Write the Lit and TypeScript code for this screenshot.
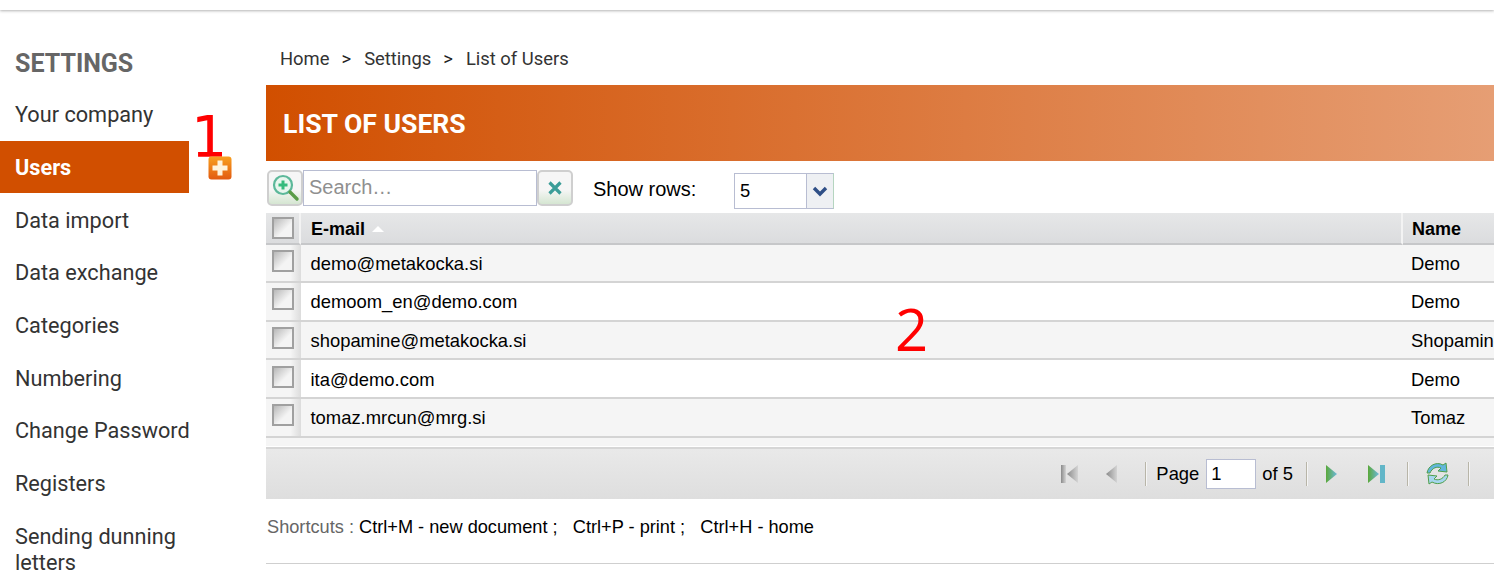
import { LitElement, html, css, svg } from "lit";
import { customElement } from "lit/decorators.js";

const menu = ["Your company", "Users", "Data import", "Data exchange", "Categories", "Numbering", "Change Password", "Registers", "Sending dunning letters"];
const rows = [
  ["demo@metakocka.si", "Demo"],
  ["demoom_en@demo.com", "Demo"],
  ["shopamine@metakocka.si", "Shopamine"],
  ["ita@demo.com", "Demo"],
  ["tomaz.mrcun@mrg.si", "Tomaz"],
];

const defs = svg`
  <linearGradient id="gr" x1="0" x2="1" y1="0" y2="0"><stop offset="0" stop-color="#8a8a8a"/><stop offset="1" stop-color="#d4d4d4"/></linearGradient>
  <linearGradient id="gn" x1="0" x2="1" y1="0" y2="0"><stop offset="0" stop-color="#5aa83a"/><stop offset="1" stop-color="#6cb8dc"/></linearGradient>
`;

@customElement("app-root")
export class AppRoot extends LitElement {
  static styles = css`
    :host { display: block; height: 579px; overflow: hidden; position: relative; background: #fff; font-family: "Liberation Sans", Arial, sans-serif; color: #000; }
    .top { height: 10px; box-shadow: 0 1px 3px rgba(0,0,0,.3); }
    .body { display: flex; }
    .side { width: 266px; flex: none; padding-top: 39px; font-family: Roboto, sans-serif; }
    .side h2 { margin: 0 0 9px 15px; font-size: 25px; line-height: 30px; font-weight: 700; color: #666; }
    .item { width: 200px; box-sizing: border-box; padding: 14.35px 0 12.35px 15px; font-size: 21.7px; line-height: 26px; color: #333; }
    .item.on { width: 189px; background: #d14f00; color: #fff; font-weight: 700; }
    .main { flex: 1; min-width: 0; }
    .crumb { height: 75px; box-sizing: border-box; padding: 37px 0 0 14px; font: 18.4px/24px Roboto, sans-serif; color: #333; display: flex; }
    .crumb i { font-style: normal; margin: 0 13px 0 12px; color: #222; }
    .banner { height: 76px; box-sizing: border-box; padding: 1px 0 0 17px; display: flex; align-items: center; background: linear-gradient(90deg, #d14f00, #e69e74); color: #fff; font: 700 26.6px Roboto, sans-serif; }
    .tools { height: 52px; display: flex; box-sizing: border-box; padding-top: 9px; }
    .ibtn { width: 36px; height: 36px; box-sizing: border-box; border: 2px solid #cfcfcf; border-radius: 5px; background: linear-gradient(#f6f6f6 55%, #d5e6d2); display: flex; align-items: center; justify-content: center; }
    .ibtn.a { margin-left: 1px; }
    .search { width: 234px; height: 36px; box-sizing: border-box; border: 1px solid #b8bdd2; font-size: 20px; line-height: 33px; padding-left: 5px; color: #8f8f8f; }
    .show { margin: 3px 0 0 20px; width: 141px; font-size: 20px; line-height: 33px; }
    .sel { width: 100px; height: 36px; margin-top: 3px; box-sizing: border-box; border: 1px solid #b8bdd2; border-right-color: #b5d5c0; display: flex; font-size: 18.4px; line-height: 33px; }
    .sel span { width: 71px; padding-left: 5px; box-sizing: border-box; }
    .sel b { flex: 1; border-left: 1px solid #b8bdd2; background: #eef0f3; display: flex; align-items: center; justify-content: center; }
    .grid { display: grid; grid-template-columns: 35px 1102px 1fr; overflow: hidden; }
    .th, .td { display: flex; align-items: center; white-space: nowrap; box-sizing: border-box; }
    .th { height: 31.6px; padding-top: 3px; background: linear-gradient(#e6e7e8, #dbdcde); border-bottom: 2px solid #c6c7c9; font-weight: 700; font-size: 18px; padding-left: 10px; }
    .th.c { border-right: 2px solid #f3f3f3; padding: 0 0 0 6px; }
    .th.e { border-right: 2px solid #f3f3f3; }
    .th.n { padding-left: 9px; }
    .td { height: 38.6px; padding-top: 2px; border-bottom: 2px solid #d4d4d4; font-size: 18.4px; padding-left: 9.5px; }
    .td.n { padding-left: 8px; }
    .td.c { padding: 0 0 4px 6px; background: linear-gradient(90deg, #f5f5f5 70%, #dcdcdc); }
    .odd { background: #f5f5f5; }
    .cb { width: 22px; height: 22px; box-sizing: border-box; border: 2px solid #a0a0a0; background: linear-gradient(135deg, #b8b8b8, #f4f4f4 60%); }
    .arrow { margin-left: 7px; width: 0; height: 0; border: 6px solid transparent; border-top: 0; border-bottom: 6px solid #fff; }
    .rest { height: 8.4px; background: #f5f5f5; }
    .gap { height: 3px; box-sizing: border-box; border-bottom: 2px solid #d6d6d6; }
    .pager { height: 50px; background: linear-gradient(#e9e9e9, #dedede); display: flex; align-items: center; justify-content: flex-end; padding-right: 24px; font-size: 18.4px; gap: 0; }
    .sep { height: 24px; background: #b8b5a8; border-right: 1px solid #f5f5f5; box-sizing: content-box; width: 1px; }
    .pg { width: 50px; height: 30px; box-sizing: border-box; border: 1px solid #b8bdd2; background: #fff; padding-left: 4px; line-height: 28px; margin: 0 6px 0 7px; }
    .pager svg { display: block; }
    .ml9 { margin-left: 9px; }
    .ml13 { margin-left: 13px; }
    .ml16 { margin-left: 16px; }
    .ml17 { margin-left: 17px; }
    .ml18 { margin-left: 18px; }
    .ml21 { margin-left: 21px; }
    .ml25 { margin-left: 25px; }
    .ml27 { margin-left: 27px; }
    .ml29 { margin-left: 29px; }
    .short { height: 65px; border-bottom: 1px solid #cfcfcf; box-sizing: border-box; padding: 17px 0 0 1px; font-size: 18.2px; line-height: 22px; display: flex; white-space: pre; }
    .short span { color: #666; }
    .mark { position: absolute; font-size: 58px; line-height: 58px; color: #f00; }
    .one { left: 191px; top: 108px; font-family: "DejaVu Sans", sans-serif; font-size: 57px; }
    .two { left: 895px; top: 300px; font-family: "Open Sans", sans-serif; }
    .plus { position: absolute; left: 208px; top: 156px; }
  `;

  private icon(kind: string, cls = "") {
    const box = (w: number, h: number, body: unknown) => html`<svg class=${cls} width=${w} height=${h} viewBox="0 0 ${w} ${h}">${defs}${body}</svg>`;
    switch (kind) {
      case "first": return box(20, 20, svg`<rect x="1" y="1" width="5" height="18" fill="url(#gr)"/><path d="M18 1v18L7 10z" fill="url(#gr)"/>`);
      case "prev": return box(13, 20, svg`<path d="M12 1v18L1 10z" fill="url(#gr)"/>`);
      case "next": return box(13, 20, svg`<path d="M1 1v18l11-9z" fill="url(#gn)"/>`);
      case "last": return box(19, 20, svg`<path d="M1 1v18l11-9z" fill="url(#gn)"/><rect x="13" y="1" width="5" height="18" fill="#62b6c8"/>`);
      default: return box(25, 25, svg`
        <path d="M2 12C3 5 11 0 18 4l3-2 1 9-9-1 3-3C12 5 7 7 5 12z" fill="#62b6dc" stroke="#4f9f4a"/>
        <path d="M23 14c-1 7-9 11-16 7l-3 2-1-9 9 1-3 3c4 2 9 0 11-4z" fill="#a6d6ee" stroke="#4f9f4a"/>`);
    }
  }

  render() {
    return html`
      <div class="top"></div>
      <div class="body">
        <nav class="side">
          <h2>SETTINGS</h2>
          ${menu.map((m, i) => html`<div class="item ${i === 1 ? "on" : ""}">${m}</div>`)}
        </nav>
        <main class="main">
          <div class="crumb">Home<i>&gt;</i>Settings<i>&gt;</i>List of Users</div>
          <div class="banner">LIST OF USERS</div>
          <div class="tools">
            <div class="ibtn a"><svg width="30" height="30" viewBox="0 0 30 30"><circle cx="13" cy="12" r="9" fill="#e8f6ee" stroke="#5cb89a" stroke-width="2.2"/><path d="M13 7.5v9M8.5 12h9" stroke="#35bb7d" stroke-width="3"/><path d="M20 19l7 7" stroke="#5a9c48" stroke-width="3.4" stroke-linecap="round"/></svg></div>
            <div class="search">Search…</div>
            <div class="ibtn"><svg width="16" height="16" viewBox="0 0 16 16"><path d="M2.5 2.5l11 11M13.5 2.5l-11 11" stroke="#3b9d98" stroke-width="3.2"/></svg></div>
            <div class="show">Show rows:</div>
            <div class="sel"><span>5</span><b><svg width="16" height="11" viewBox="0 0 16 11"><path d="M2 2l6 6 6-6" fill="none" stroke="#2f4f86" stroke-width="3.4"/></svg></b></div>
          </div>
          <div class="grid">
            <div class="th c"><div class="cb"></div></div>
            <div class="th e">E-mail<div class="arrow"></div></div>
            <div class="th n">Name</div>
            ${rows.map((r, i) => html`
              <div class="td c"><div class="cb"></div></div>
              <div class="td ${i % 2 ? "" : "odd"}">${r[0]}</div>
              <div class="td n ${i % 2 ? "" : "odd"}">${r[1]}</div>`)}
          </div>
          <div class="rest"></div>
          <div class="gap"></div>
          <div class="pager">
            ${this.icon("first")}
            ${this.icon("prev", "ml25")}
            <div class="sep ml27"></div>
            <span class="ml9">Page</span>
            <div class="pg">1</div>
            <span>of 5</span>
            <div class="sep ml13"></div>
            ${this.icon("next", "ml17")}
            ${this.icon("last", "ml29")}
            <div class="sep ml21"></div>
            ${this.icon("refresh", "ml16")}
            <div class="sep ml18"></div>
          </div>
          <div class="short"><span>Shortcuts : </span>Ctrl+M - new document ;   Ctrl+P - print ;   Ctrl+H - home</div>
        </main>
      </div>
      <div class="mark one">1</div>
      <div class="mark two">2</div>
      <svg class="plus" width="24" height="24" viewBox="0 0 24 24"><defs><linearGradient id="o" x1="0" x2="0" y1="0" y2="1"><stop offset="0" stop-color="#f8a020"/><stop offset="1" stop-color="#e25a10"/></linearGradient></defs><rect x=".5" y=".5" width="23" height="23" rx="3" fill="url(#o)"/><path d="M12 4.5v15M4.5 12h15" stroke="#fff3dc" stroke-width="5"/></svg>
    `;
  }
}
